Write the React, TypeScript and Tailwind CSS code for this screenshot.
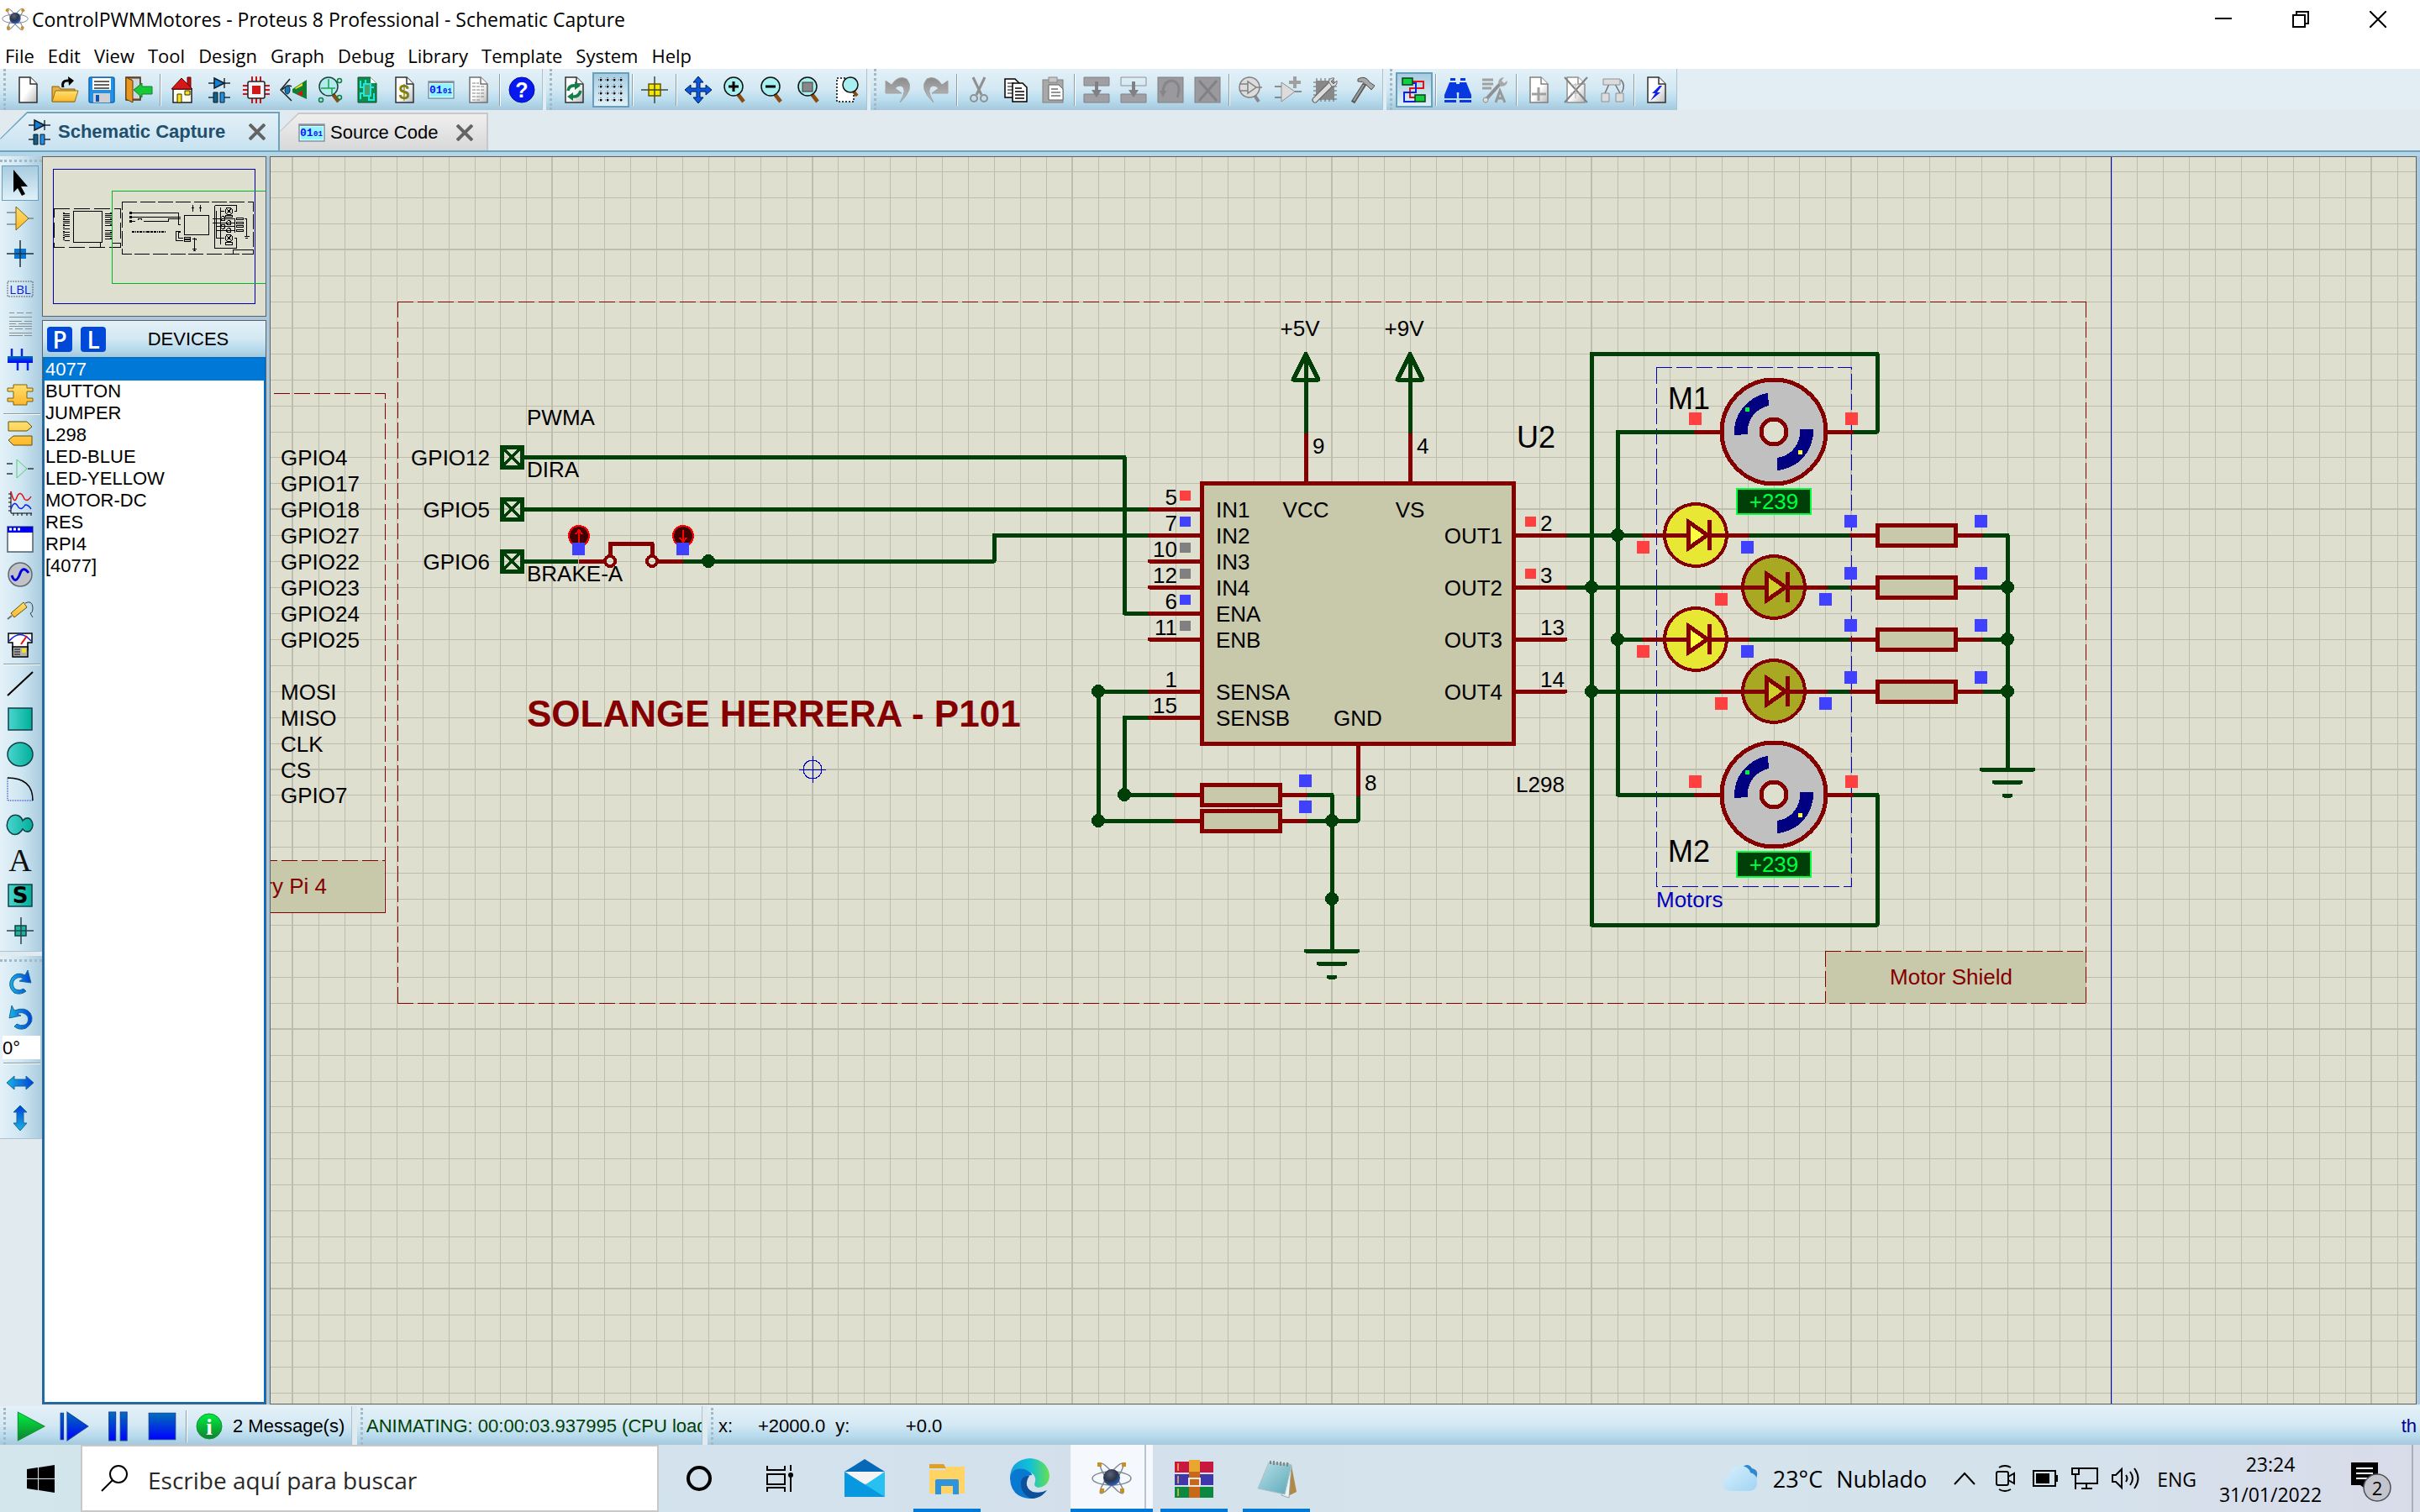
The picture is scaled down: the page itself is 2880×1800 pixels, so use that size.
import React from "react";

const ARIAL = "font-['Liberation_Sans',Arial,sans-serif]";

/* ------------------------------------------------------------------ */
/* Shared gradients                                                    */
/* ------------------------------------------------------------------ */

function Gradients() {
  return (
    <svg className="absolute h-0 w-0" aria-hidden="true">
      <defs>
        <linearGradient id="blueV" x1="0" y1="0" x2="0" y2="1">
          <stop offset="0" stopColor="#0070b8" />
          <stop offset="1" stopColor="#0000ff" />
        </linearGradient>
        <linearGradient id="blueH" x1="0" y1="0" x2="1" y2="0">
          <stop offset="0" stopColor="#18b4e4" />
          <stop offset="1" stopColor="#0040d8" />
        </linearGradient>
        <linearGradient id="blueUp" x1="0" y1="1" x2="0" y2="0">
          <stop offset="0" stopColor="#18b4e4" />
          <stop offset="1" stopColor="#0040d8" />
        </linearGradient>
        <linearGradient id="greenV" x1="0" y1="0" x2="0" y2="1">
          <stop offset="0" stopColor="#00f040" />
          <stop offset="1" stopColor="#108030" />
        </linearGradient>
        <linearGradient id="tealH" x1="0" y1="0" x2="1" y2="0">
          <stop offset="0" stopColor="#4cd4d0" />
          <stop offset="1" stopColor="#00b098" />
        </linearGradient>
        <linearGradient id="goldV" x1="0" y1="0" x2="0" y2="1">
          <stop offset="0" stopColor="#ffe070" />
          <stop offset="1" stopColor="#fcb828" />
        </linearGradient>
        <linearGradient id="grayV" x1="0" y1="0" x2="0" y2="1">
          <stop offset="0" stopColor="#8c8c8c" />
          <stop offset="1" stopColor="#c0c0c0" />
        </linearGradient>
        <linearGradient id="paper" x1="0" y1="0" x2="1" y2="1">
          <stop offset="0.5" stopColor="#ffffff" />
          <stop offset="1" stopColor="#b8b8b8" />
        </linearGradient>
        <linearGradient id="edgeTop" x1="0" y1="0" x2="1" y2="0">
          <stop offset="0" stopColor="#1a9cdc" />
          <stop offset="0.5" stopColor="#10c0d8" />
          <stop offset="1" stopColor="#68e050" />
        </linearGradient>
        <linearGradient id="cloud" x1="0" y1="0" x2="1" y2="1">
          <stop offset="0" stopColor="#d8f0fc" />
          <stop offset="1" stopColor="#a0d4f4" />
        </linearGradient>
        <linearGradient id="note" x1="0" y1="0" x2="1" y2="1">
          <stop offset="0" stopColor="#b8e0e8" />
          <stop offset="1" stopColor="#5ca8b8" />
        </linearGradient>
        <radialGradient id="atom" cx="0.4" cy="0.3" r="0.8">
          <stop offset="0" stopColor="#586478" />
          <stop offset="0.5" stopColor="#2c3448" />
          <stop offset="1" stopColor="#3070e0" />
        </radialGradient>
      </defs>
    </svg>
  );
}

function Icon({ children, className = "h-8 w-8" }: { children: React.ReactNode; className?: string }) {
  return (
    <svg viewBox="0 0 32 32" className={`${className} shrink-0 overflow-visible`} fill="none" aria-hidden="true">
      {children}
    </svg>
  );
}

/* ------------------------------------------------------------------ */
/* Toolbar icons                                                       */
/* ------------------------------------------------------------------ */

const page = (stroke = "#303030") => (
  <>
    <path d="M6 1H19L27 9V31H6Z" fill="url(#paper)" stroke={stroke} strokeWidth="1.5" />
    <path d="M19 1V9H27" fill="#fff" stroke={stroke} strokeWidth="1.5" />
  </>
);

const lens = (fill = "#a8f0f0", stroke = "#101010", handle = "#8a4a10") => (
  <>
    <path d="M19 21L26 30" stroke={handle} strokeWidth="4.5" />
    <circle cx="14" cy="12" r="11" fill={fill} stroke={stroke} strokeWidth="1.5" />
  </>
);

const schematicIcon = (
  <>
    <path d="M3 8H29M3 25H10M22 25H29M22 2V14" stroke="#203040" strokeWidth="1.5" />
    <path d="M10 2L22 8L10 14Z" fill="#1080d8" stroke="#101820" strokeWidth="1.5" />
    <path d="M9 19H14V31H9Z" fill="#10608c" stroke="#101820" />
    <path d="M17 19H22V31H17Z" fill="#2090e8" stroke="#101820" />
  </>
);

const sourceIcon = (
  <>
    <rect x="1" y="6" width="30" height="20" fill="#d8ffff" stroke="#7c98a8" strokeWidth="1.5" />
    <path d="M1 7H31" stroke="#8c8c98" strokeWidth="2" />
    <rect x="3" y="9" width="26" height="15" fill="#90f4fc" />
    <text x="2" y="20" fontSize="13" fontWeight="bold" fill="#1010f0" fontFamily="Liberation Mono, monospace">
      01
    </text>
    <text x="18" y="20" fontSize="9" fontWeight="bold" fill="#1010f0" fontFamily="Liberation Mono, monospace">
      01
    </text>
  </>
);

const I: Record<string, React.ReactNode> = {
  new: page(),
  open: (
    <>
      <path d="M1 30V12H9L11 15H28V30Z" fill="#e8b040" stroke="#806010" />
      <path d="M1 30L5 17H32L28 30Z" fill="url(#goldV)" stroke="#907020" />
      <path d="M14 13Q12 4 21 5" stroke="#000" strokeWidth="3" />
      <path d="M20 0L27 5L21 11Z" fill="#000" />
    </>
  ),
  save: (
    <>
      <rect x="1" y="1" width="30" height="30" rx="2" fill="#2090e8" stroke="#1068b0" strokeWidth="1.5" />
      <rect x="5" y="2" width="22" height="14" fill="#fff" />
      <path d="M7 6H25M7 10H25M7 14H25" stroke="#303030" strokeWidth="1.5" />
      <rect x="6" y="20" width="20" height="11" fill="#d0d0d0" />
      <rect x="9" y="22" width="4" height="8" fill="#1050b0" />
    </>
  ),
  exit: (
    <>
      <path d="M1 1H18V28H1Z" fill="#a08060" stroke="#503010" strokeWidth="1.5" />
      <path d="M8 3H17V26H8Z" fill="#c8d8e0" />
      <path d="M1 1L9 5V31L1 27Z" fill="#e89820" stroke="#603808" />
      <path d="M10 16L20 8V12H32V21H20V25Z" fill="#18c838" stroke="#108028" />
    </>
  ),
  home: (
    <>
      <path d="M22 1H26V15H22Z" fill="#c01010" stroke="#600" />
      <path d="M5 15H27V31H5Z" fill="#fffff0" stroke="#202020" strokeWidth="1.5" />
      <path d="M3 15L15 2L28 15Z" fill="#d81818" stroke="#500" />
      <path d="M10 21H15V31H10ZM19 17H25V22H19Z" fill="#f8e020" stroke="#303000" />
    </>
  ),
  sch: schematicIcon,
  chip: (
    <>
      <path d="M11 0V32M16 0V32M21 0V32M0 11H32M0 16H32M0 21H32" stroke="#d81010" strokeWidth="2" />
      <rect x="6" y="6" width="20" height="20" rx="2" fill="#f0f4f8" stroke="#202020" strokeWidth="1.5" />
      <rect x="11" y="11" width="10" height="10" fill="#d01818" />
    </>
  ),
  eye: (
    <>
      <path d="M12 3L1 16L14 29M3 16Q9 9 14 12" stroke="#202020" strokeWidth="1.5" />
      <ellipse cx="9" cy="16" rx="3" ry="5" fill="#1878b8" stroke="#082840" />
      <path d="M15 15L32 4V27L15 19Z" fill="#108030" />
      <path d="M18 14L27 8V11L19 15Z" fill="#f8e020" />
      <path d="M20 21L27 17V23Z" fill="#e01010" />
    </>
  ),
  inspect: (
    <>
      {lens("#b0ecec", "#204040")}
      <path d="M5 14H22M14 3V14M18 14V21" stroke="#20a050" strokeWidth="1.5" />
      <circle cx="27" cy="5" r="2.5" stroke="#108040" strokeWidth="1.5" />
      <circle cx="5" cy="28" r="2.5" stroke="#108040" strokeWidth="1.5" />
      <circle cx="27" cy="25" r="2.5" stroke="#108040" strokeWidth="1.5" />
    </>
  ),
  pcb: (
    <>
      <path d="M5 1H20L27 8V31H5Z" fill="#108c50" stroke="#085028" />
      <path d="M20 1V8H27Z" fill="#fff" />
      <rect x="12" y="9" width="8" height="14" fill="#48a070" stroke="#20e8d8" strokeWidth="2" />
      <path d="M8 5V13H12M8 27V20H12M14 9V4M18 23V28H24V20M20 13H24" stroke="#20e8d8" strokeWidth="2" />
    </>
  ),
  bom: (
    <>
      {page()}
      <text x="16" y="27" textAnchor="middle" fontSize="23" fontWeight="bold" fill="#808010" fontFamily="Liberation Sans, sans-serif">
        $
      </text>
    </>
  ),
  code: sourceIcon,
  notes: (
    <>
      {page("#707070")}
      <path d="M9 8H17M9 12H24M9 16H24M9 20H24M9 24H24M9 28H18" stroke="#808080" strokeDasharray="4 1" />
    </>
  ),
  help: (
    <>
      <circle cx="16" cy="16" r="15" fill="#0818f0" stroke="#0008a0" />
      <text x="16" y="25" textAnchor="middle" fontSize="25" fontWeight="bold" fill="#fff" fontFamily="Liberation Sans, sans-serif">
        ?
      </text>
    </>
  ),
  refresh: (
    <>
      {page()}
      <path d="M9 17Q10 10 18 11M24 17Q22 25 14 24" stroke="#108048" strokeWidth="3.5" />
      <path d="M17 6L24 11L17 16ZM15 19L8 24L15 29Z" fill="#108048" />
    </>
  ),
  grid: (
    <>
      {[4, 12, 20, 28].map((y) => (
        <path key={y} d={`M1 ${y}H32`} stroke="#303840" strokeDasharray="1 3" />
      ))}
      {[4, 12, 20, 28].map((x) => (
        <path key={x} d={`M${x} 1V32`} stroke="#303840" strokeDasharray="1 3" />
      ))}
      {[4, 12, 20, 28].map((y) => (
        <path key={`c${y}`} d={`M3 ${y}H5M11 ${y}H13M19 ${y}H21M27 ${y}H29`} stroke="#000" strokeWidth="2" />
      ))}
    </>
  ),
  origin: (
    <>
      <rect x="9" y="9" width="14" height="14" fill="#f8e800" stroke="#605800" strokeWidth="1.5" />
      <path d="M16 0V32M0 16H32" stroke="#404838" strokeWidth="1.5" />
    </>
  ),
  pan: (
    <path
      d="M16 0L22 7H18V14H25V10L32 16L25 22V18H18V25H22L16 32L10 25H14V18H7V22L0 16L7 10V14H14V7H10Z"
      fill="#0858e0"
      stroke="#001850"
    />
  ),
  zin: (
    <>
      {lens()}
      <path d="M8 12H20M14 6V18" stroke="#000" strokeWidth="3" />
    </>
  ),
  zout: (
    <>
      {lens()}
      <path d="M8 12H20" stroke="#000" strokeWidth="3" />
    </>
  ),
  zall: (
    <>
      {lens()}
      <rect x="8" y="7" width="12" height="11" fill="#888" stroke="#404040" />
    </>
  ),
  zarea: (
    <>
      <rect x="5" y="2" width="20" height="28" fill="#fff" stroke="#000" strokeWidth="1.5" strokeDasharray="2 2" />
      <path d="M24 17L29 23" stroke="#8a4a10" strokeWidth="4" />
      <circle cx="21" cy="10" r="9" fill="#a8f0f0" stroke="#101010" strokeWidth="1.5" />
    </>
  ),
  undo: (
    <path d="M1 5L8 10Q16 -2 26 3Q36 14 18 31Q28 14 19 11Q15 11 12 14L20 20H1Z" fill="url(#grayV)" stroke="#a0a0a0" />
  ),
  redo: (
    <path d="M31 5L24 10Q16 -2 6 3Q-4 14 14 31Q4 14 13 11Q17 11 20 14L12 20H31Z" fill="url(#grayV)" stroke="#a0a0a0" />
  ),
  cut: (
    <>
      <path d="M9 1L19 22M23 1L13 22" stroke="#909090" strokeWidth="3" />
      <circle cx="10" cy="26" r="4" stroke="#909090" strokeWidth="2" />
      <circle cx="22" cy="26" r="4" stroke="#909090" strokeWidth="2" />
    </>
  ),
  copy: (
    <>
      <path d="M3 3H15L20 8V25H3Z" fill="#fff" stroke="#000" strokeWidth="1.5" />
      <path d="M6 8H14M6 12H14M6 16H14M6 20H14" stroke="#000" />
      <path d="M12 8H24L29 13V30H12Z" fill="#fff" stroke="#000" strokeWidth="1.5" />
      <path d="M15 14H23M15 18H26M15 22H26M15 26H26" stroke="#000" strokeWidth="1.5" />
    </>
  ),
  paste: (
    <>
      <rect x="4" y="4" width="24" height="27" fill="#a8a8a8" stroke="#808080" />
      <rect x="11" y="1" width="10" height="6" fill="#c8c8c8" stroke="#888" />
      <path d="M11 10H23L28 15V28H11Z" fill="#fff" stroke="#606060" />
      <path d="M14 15H22M14 19H25M14 23H25" stroke="#707070" strokeWidth="1.5" />
    </>
  ),
  bcopy: (
    <>
      <path d="M1 1H31V11H1ZM1 21H31V31H1Z" fill="#a0a0a4" stroke="#808088" />
      <path d="M14 6H18V16H22L16 25L10 16H14Z" fill="#808084" />
    </>
  ),
  bmove: (
    <>
      <path d="M1 1H31V11H1Z" stroke="#909094" />
      <path d="M1 21H31V31H1Z" fill="#a0a0a4" stroke="#808088" />
      <path d="M14 6H18V16H22L16 25L10 16H14Z" fill="#808084" />
    </>
  ),
  brot: (
    <>
      <rect x="1" y="1" width="30" height="30" fill="#9a9a9e" stroke="#808084" />
      <path d="M24 25Q30 8 18 5Q8 5 7 18" stroke="#86868a" strokeWidth="3" />
      <path d="M3 17H11L7 25Z" fill="#86868a" />
    </>
  ),
  bdel: (
    <>
      <rect x="1" y="1" width="30" height="30" fill="#9a9a9e" stroke="#808084" />
      <path d="M6 5L27 29M27 5L6 29" stroke="#828286" strokeWidth="3" />
    </>
  ),
  pick: (
    <>
      <path d="M19 21L25 30" stroke="#888" strokeWidth="4" />
      <circle cx="14" cy="13" r="12" fill="#dcdcdc" stroke="#808080" strokeWidth="1.5" />
      <path d="M3 9H12M3 17H12M12 6V20L22 13ZM22 13H29" stroke="#808080" strokeWidth="1.5" />
    </>
  ),
  make: (
    <>
      <path d="M0 12H8M0 25H8M24 18H32" stroke="#707070" strokeWidth="1.5" />
      <path d="M8 7V30L24 18Z" fill="#dcdcdc" stroke="#909090" />
      <path d="M24 0V14M17 7H31" stroke="#a0a0a0" strokeWidth="4" />
    </>
  ),
  pack: (
    <>
      <path d="M6 2V30M11 2V30M16 2V30M21 2V30M26 2V30M2 7H30M2 12H30M2 17H30M2 22H30M2 27H30" stroke="#606060" />
      <rect x="5" y="5" width="22" height="22" fill="#888" />
      <path d="M4 28L22 10" stroke="#606060" strokeWidth="7" strokeLinecap="round" />
      <path d="M4 28L22 10" stroke="#dcdcdc" strokeWidth="5" strokeLinecap="round" />
      <path d="M20 6Q22 1 27 2L23 6L26 9L30 5Q31 12 24 12Z" fill="#dcdcdc" stroke="#707070" />
    </>
  ),
  hammer: (
    <>
      <path d="M5 31L19 9" stroke="#585858" strokeWidth="5" />
      <path d="M6 29L18 10" stroke="#a0a0a0" strokeWidth="2" />
      <path d="M11 3Q20 -2 25 7L31 11L27 16L21 10Q17 5 11 6Z" fill="#a8a8a8" stroke="#505050" />
    </>
  ),
  wire: (
    <>
      <path d="M13 6H27V14H11V25H19" stroke="#e81010" strokeWidth="2" />
      <path d="M10 8H18V14M18 13V19H4V30H18" stroke="#1020e0" strokeWidth="2" />
      <rect x="2" y="2" width="12" height="8" fill="#10d040" stroke="#084018" strokeWidth="1.5" />
      <rect x="17" y="22" width="12" height="8" fill="#10d040" stroke="#084018" strokeWidth="1.5" />
    </>
  ),
  find: (
    <path d="M7 2H13V5H7ZM19 2H25V5H19ZM6 7H14L15 26H0V22ZM18 7H26L32 22V26H17ZM13 9H19V19H13ZM0 28H14V31H0ZM18 28H32V31H18Z" fill="#0838e0" />
  ),
  prop: (
    <>
      <path d="M1 4H14M1 9H14M1 14H12" stroke="#a0a0a0" strokeWidth="3" />
      <path d="M4 29L22 9" stroke="#909090" strokeWidth="4" />
      <path d="M20 7Q21 1 27 1L24 5L27 8L31 5Q31 12 23 12Z" fill="#a8a8a8" />
      <circle cx="5" cy="28" r="3" fill="#dcdcdc" stroke="#909090" />
      <path d="M17 31L22 17L28 31M19 26H26" stroke="#989898" strokeWidth="3" />
    </>
  ),
  sheetAdd: (
    <>
      {page("#808080")}
      <path d="M16 13V29M8 21H25" stroke="#a0a0a0" strokeWidth="3" />
    </>
  ),
  sheetDel: (
    <>
      {page("#909090")}
      <path d="M3 1L30 31M30 1L3 31" stroke="#808080" strokeWidth="2" />
      <path d="M10 10H22M10 20H22M16 8V26" stroke="#b0b0b0" />
    </>
  ),
  parent: (
    <>
      <path d="M12 9L7 20M19 9L25 20M26 4Q32 10 27 19" stroke="#707070" strokeWidth="1.5" />
      <path d="M5 3H25V10H5ZM3 20H12V30H3ZM20 20H29V30H20Z" fill="#dcdcdc" stroke="#909090" />
    </>
  ),
  erc: (
    <>
      {page()}
      <path d="M20 11L11 20H15L9 29L21 19H17L23 11Z" fill="#1020e8" />
    </>
  ),
};

/* ------------------------------------------------------------------ */
/* Mode icons for the left tool column                                 */
/* ------------------------------------------------------------------ */

const M: Record<string, React.ReactNode> = {
  select: <path d="M8 0V27L13 22L18 31L22 29L17 20H25Z" fill="#000" />,
  component: (
    <>
      <path d="M0 9H11M0 23H11M25 16H32" stroke="#808890" strokeWidth="1.5" />
      <path d="M11 2L26 16L11 30Z" fill="url(#goldV)" stroke="#806010" />
    </>
  ),
  junction: (
    <>
      <rect x="9" y="10" width="14" height="12" fill="#0878d8" />
      <path d="M16 0V32M0 16H32" stroke="#203038" strokeWidth="1.5" />
    </>
  ),
  label: (
    <>
      <rect x="1" y="7" width="30" height="18" stroke="#606060" strokeDasharray="2 1" />
      <text x="16" y="22" textAnchor="middle" fontSize="15" fill="#1020c8" fontFamily="Open Sans, sans-serif">
        LBL
      </text>
    </>
  ),
  script: (
    <path
      d="M3 2H9M12 2H20M23 2H30M3 7H30M3 12H18M21 12H30M3 15H11M14 15H30M3 18H30M3 21H7M10 21H19M22 21H30M3 26H30M3 29H19M21 29H30"
      stroke="#88908f"
      shapeRendering="crispEdges"
    />
  ),
  bus: (
    <>
      <path d="M6 3V12M18 3V12M13 20V29M25 20V29" stroke="#0828e0" strokeWidth="2.5" />
      <rect x="1" y="12" width="30" height="8" fill="url(#blueV)" />
    </>
  ),
  subcircuit: (
    <path d="M8 4H24V8H31V12H24V20H31V24H24V28H8V24H1V20H8V12H1V8H8Z" fill="url(#goldV)" stroke="#806010" />
  ),
  terminal: (
    <path d="M2 2H24L30 8L24 13H2ZM30 19H8L2 24L8 30H30Z" fill="url(#goldV)" stroke="#605010" />
  ),
  pin: (
    <>
      <path d="M0 10H7M0 22H7M25 16H32" stroke="#303838" strokeWidth="1.5" />
      <path d="M12 5L24 16L12 27Z" stroke="#50d070" />
    </>
  ),
  graph: (
    <>
      <path d="M5 1V27H30M2 4H5M2 9H5M2 14H5M2 19H5M2 24H5M8 27V30M13 27V30M18 27V30M24 27V30M29 27V30" stroke="#000" />
      <path d="M5 1Q9 18 12 8Q16 -2 21 10Q25 14 29 7" stroke="#e81010" strokeWidth="1.5" />
      <path d="M5 22Q9 10 14 20Q18 24 22 17Q26 17 29 22" stroke="#1020e8" strokeWidth="1.5" />
    </>
  ),
  popup: (
    <>
      <rect x="1" y="1" width="30" height="30" fill="#fff" stroke="#506068" strokeWidth="1.5" />
      <rect x="1" y="1" width="30" height="7" fill="#0000f0" />
      <path d="M3 4H6M8 4H11M13 4H16" stroke="#fff" strokeWidth="3" />
    </>
  ),
  generator: (
    <>
      <circle cx="16" cy="16" r="14" fill="#c0c4c8" stroke="#606870" strokeWidth="1.5" />
      <path d="M6 17Q10 28 15 17Q19 4 26 14" stroke="#0000e8" strokeWidth="3" />
    </>
  ),
  probe: (
    <>
      <path d="M1 27L6 23" stroke="#707070" strokeWidth="2" />
      <path d="M5 20L20 7L24 13L9 25Z" fill="url(#goldV)" stroke="#605010" />
      <path d="M22 8Q30 4 31 13Q31 20 28 20L31 25" stroke="#304048" />
    </>
  ),
  meter: (
    <>
      <path d="M2 2H30V13H25V22H7V13H2Z" fill="#fff" stroke="#000" strokeWidth="1.5" />
      <path d="M3 11Q16 -4 29 11" stroke="#1020e8" strokeWidth="1.5" />
      <path d="M17 15L24 5" stroke="#e81010" strokeWidth="2" />
      <rect x="7" y="18" width="18" height="12" fill="#b0b0b0" stroke="#000" strokeWidth="1.5" />
      <path d="M9 21H16M9 24H16M9 27H16" stroke="#000" />
      <rect x="18" y="20" width="5" height="5" fill="#f8e020" />
    </>
  ),
  line: <path d="M1 30L31 2" stroke="#000" strokeWidth="2" />,
  box: <rect x="2" y="3" width="28" height="26" fill="url(#tealH)" stroke="#104048" strokeWidth="1.5" />,
  circle: <ellipse cx="16" cy="16" rx="15" ry="14" fill="url(#tealH)" stroke="#104048" strokeWidth="1.5" />,
  arc: (
    <>
      <path d="M1 2V29H31" stroke="#1020d0" strokeDasharray="1 1" />
      <path d="M1 2Q31 2 31 29" stroke="#000" strokeWidth="1.5" />
    </>
  ),
  shape: (
    <path d="M19 11Q23 6 28 9Q34 16 28 23Q23 26 19 21Q14 29 7 27Q-2 22 1 12Q5 2 14 5Q18 7 19 11Z" fill="url(#tealH)" stroke="#104048" strokeWidth="1.5" />
  ),
  text: (
    <text x="16" y="29" textAnchor="middle" fontSize="38" fill="#101010" fontFamily="Liberation Serif, serif">
      A
    </text>
  ),
  symbol: (
    <>
      <rect x="2" y="3" width="28" height="26" fill="url(#tealH)" stroke="#104048" strokeWidth="1.5" />
      <text x="16" y="25" textAnchor="middle" fontSize="26" fontWeight="bold" fill="#000" fontFamily="DejaVu Sans, sans-serif">
        S
      </text>
    </>
  ),
  marker: (
    <>
      <rect x="10" y="10" width="13" height="12" fill="#18b8a0" stroke="#104048" strokeWidth="1.5" />
      <path d="M17 0V32M0 16H32" stroke="#304048" strokeWidth="1.5" />
    </>
  ),
  cw: (
    <path d="M23 26Q17 31 9 28Q0 20 6 10Q12 2 22 7L25 1L29 16L15 14L20 11Q13 7 8 14Q6 21 11 24Q16 26 20 23Z" fill="url(#blueH)" stroke="#186898" />
  ),
  ccw: (
    <path d="M9 26Q15 31 23 28Q34 20 28 10Q22 2 9 7L6 1L3 16L17 13L12 11Q19 7 25 14Q27 21 22 24Q16 26 12 23Z" fill="url(#blueH)" stroke="#186898" />
  ),
  flipH: <path d="M0 16L9 8V12H23V8L32 16L23 24V20H9V24Z" fill="url(#blueH)" stroke="#186898" />,
  flipV: <path d="M16 1L24 9H20V22H24L16 31L8 22H12V9H8Z" fill="url(#blueUp)" stroke="#186898" />,
};

/* ------------------------------------------------------------------ */
/* Chrome                                                              */
/* ------------------------------------------------------------------ */

function Atom({ className }: { className: string }) {
  return (
    <svg viewBox="0 0 48 40" className={className} fill="none" aria-hidden="true">
      <ellipse cx="24" cy="19" rx="23" ry="8" stroke="#808898" strokeWidth="1.5" />
      <ellipse cx="24" cy="20" rx="23" ry="5" transform="rotate(55 24 20)" stroke="#808898" strokeWidth="1.5" />
      <ellipse cx="24" cy="20" rx="23" ry="5" transform="rotate(-55 24 20)" stroke="#808898" strokeWidth="1.5" />
      <circle cx="24" cy="18" r="10" fill="url(#atom)" />
      <circle cx="10" cy="4" r="3" fill="#c89020" />
      <circle cx="38" cy="4" r="3" fill="#c89020" />
      <circle cx="12" cy="35" r="3" fill="#c89020" />
      <circle cx="37" cy="35" r="3" fill="#c89020" />
    </svg>
  );
}

function TitleBar() {
  return (
    <header className="flex h-[46px] items-center bg-white pl-0.5 pr-1">
      <Atom className="h-7 w-8" />
      <h1 className="ml-1 text-[23px] leading-8 text-black">ControlPWMMotores - Proteus 8 Professional - Schematic Capture</h1>
      <div className="ml-auto flex h-full">
        <button aria-label="Minimize" className="flex w-[92px] items-center justify-center">
          <svg viewBox="0 0 20 20" className="h-5 w-5" aria-hidden="true">
            <path d="M0 9H20" stroke="#000" strokeWidth="2" />
          </svg>
        </button>
        <button aria-label="Restore" className="flex w-[92px] items-center justify-center">
          <svg viewBox="0 0 20 20" className="h-5 w-5" fill="none" aria-hidden="true">
            <path d="M1 5H15V19H1ZM5 5V1H19V15H15" stroke="#000" strokeWidth="2" />
          </svg>
        </button>
        <button aria-label="Close" className="flex w-[92px] items-center justify-center">
          <svg viewBox="0 0 20 20" className="h-5 w-5" aria-hidden="true">
            <path d="M0 0L20 20M20 0L0 20" stroke="#000" strokeWidth="2" />
          </svg>
        </button>
      </div>
    </header>
  );
}

const MENUS = ["File", "Edit", "View", "Tool", "Design", "Graph", "Debug", "Library", "Template", "System", "Help"];

function MenuBar() {
  return (
    <nav className="flex h-9 items-center gap-4 bg-white pl-1.5 pt-1 text-[22px] leading-8 text-black">
      {MENUS.map((m) => (
        <button key={m}>{m}</button>
      ))}
    </nav>
  );
}

const TOOLBARS: string[][] = [
  ["new", "open", "save", "exit", "|", "home", "sch", "chip", "eye", "inspect", "pcb", "bom", "code", "notes", "|", "help"],
  ["refresh", "grid", "|", "origin", "|", "pan", "zin", "zout", "zall", "zarea"],
  ["undo", "redo", "|", "cut", "copy", "paste", "|", "bcopy", "bmove", "brot", "bdel", "|", "pick", "make", "pack", "hammer"],
  ["wire", "|", "find", "prop", "|", "sheetAdd", "sheetDel", "parent", "|", "erc"],
];

const BAR = "bg-[linear-gradient(to_bottom,#e4f1f8,#d3e8f3_50%,#b9dcee_75%,#a6c8dc)]";

function Grip() {
  return <span className="mx-1 w-[3px] self-stretch border-l-[3px] border-dotted border-[#a4b8c4]" />;
}

function ToolBars() {
  return (
    <div className="flex h-[49px] gap-1 bg-[#e2eef4]">
      {TOOLBARS.map((bar, b) => (
        <div key={b} role="toolbar" className={`flex items-center border-r border-[#a8c4d4] pr-0.5 ${BAR}`}>
          <Grip />
          {bar.map((name, k) =>
            name === "|" ? (
              <span key={k} className="mx-[3px] h-[38px] w-0.5 border-l border-[#8c9ca8] bg-white" />
            ) : (
              <button
                key={k}
                aria-label={name}
                className={
                  name === "grid" || name === "wire"
                    ? "flex h-[42px] w-11 items-center justify-center border-2 border-[#68a0bc] bg-[linear-gradient(to_bottom,#a8cce0,#e0f0f8)]"
                    : "flex h-[42px] w-11 items-center justify-center"
                }
              >
                <Icon>{I[name]}</Icon>
              </button>
            ),
          )}
        </div>
      ))}
    </div>
  );
}

function CloseX() {
  return (
    <svg viewBox="0 0 20 20" className="h-5 w-5" aria-hidden="true">
      <path d="M1 1L19 19M19 1L1 19" stroke="#646464" strokeWidth="4" />
    </svg>
  );
}

function Tabs() {
  return (
    <div role="tablist" className={`flex h-[55px] flex-col bg-[#e0eaef] ${ARIAL}`}>
      <div className="flex h-[50px] items-end border-b-2 border-[#6ca3bd]">
        <div className="relative flex h-[46px] w-[333px] items-center bg-[linear-gradient(to_bottom,#e4f1f8,#c8e2f0)] pl-[31px] pt-0.5 [clip-path:polygon(0_32px,32px_0,100%_0,100%_100%,0_100%)]">
          <svg className="absolute inset-0 h-full w-full" fill="none" aria-hidden="true">
            <path d="M0 32L32 1H332V46" stroke="#6ca3bd" strokeWidth="2" />
          </svg>
          <button role="tab" aria-selected="true" className="relative flex items-center text-[22px] font-bold leading-8 text-[#20506e]">
            <Icon>{schematicIcon}</Icon>
            <span className="ml-1.5">Schematic Capture</span>
          </button>
          <button aria-label="Close Schematic Capture" className="relative ml-7">
            <CloseX />
          </button>
        </div>
        <div className="relative flex h-[45px] w-[248px] items-center bg-[linear-gradient(to_bottom,#f0f0f0,#d8d8d8)] pl-[22px] pt-0.5 [clip-path:polygon(0_22px,22px_0,100%_0,100%_100%,0_100%)]">
          <svg className="absolute inset-0 h-full w-full" fill="none" aria-hidden="true">
            <path d="M0 22L22 1H247V45" stroke="#c8c8c8" strokeWidth="2" />
          </svg>
          <button role="tab" aria-selected="false" className="relative flex items-center text-[22px] leading-8 text-black">
            <Icon>{sourceIcon}</Icon>
            <span className="ml-1.5">Source Code</span>
          </button>
          <button aria-label="Close Source Code" className="relative ml-[22px]">
            <CloseX />
          </button>
        </div>
      </div>
      <div className="h-[5px] bg-[#b4d5e6]" />
    </div>
  );
}

/* ------------------------------------------------------------------ */
/* Left column                                                         */
/* ------------------------------------------------------------------ */

const MODES = [
  "select", "component", "junction", "label", "script", "bus", "subcircuit", "|",
  "terminal", "pin", "graph", "popup", "generator", "probe", "meter", "|",
  "line", "box", "circle", "arc", "shape", "text", "symbol", "marker",
];

const SIDE = "bg-[linear-gradient(to_right,#e4f1f8,#cfe6f2_50%,#a9cbde)]";

function SideRule() {
  return <span className="my-px ml-1 mr-0.5 h-0.5 border-t border-[#8c9ca8] bg-white" />;
}

function ModeButton({ name }: { name: string }) {
  return (
    <button
      aria-label={name}
      className={
        name === "select"
          ? "ml-0.5 flex h-[42px] w-11 items-center justify-center border border-[#68a0bc] bg-[linear-gradient(to_bottom,#a8cce0,#e0f0f8)]"
          : "ml-0.5 flex h-[42px] w-11 items-center justify-center"
      }
    >
      <Icon>{M[name]}</Icon>
    </button>
  );
}

function ModeColumn() {
  return (
    <aside className="flex w-[50px] shrink-0 flex-col gap-[5px] bg-[#e0eaef]">
      <div className={`flex flex-col border-b border-[#a8c4d4] pb-[3px] ${SIDE}`}>
        <span className="my-1 border-t-[3px] border-dotted border-[#a4b8c4]" />
        {MODES.map((name, k) => (name === "|" ? <SideRule key={k} /> : <ModeButton key={k} name={name} />))}
      </div>
      <div className={`flex flex-col border-b border-[#a8c4d4] pb-[3px] ${SIDE}`}>
        <span className="my-1 border-t-[3px] border-dotted border-[#a4b8c4]" />
        <ModeButton name="cw" />
        <ModeButton name="ccw" />
        <input
          aria-label="Rotation angle"
          defaultValue="0°"
          className={`mb-[3px] ml-[3px] h-7 w-[45px] bg-white text-[22px] text-black ${ARIAL}`}
        />
        <SideRule />
        <ModeButton name="flipH" />
        <ModeButton name="flipV" />
      </div>
    </aside>
  );
}

function Overview() {
  return (
    <div className="border border-[#606060] bg-[#dfdfd0]">
      <svg viewBox="153 21 795 567" className="block w-full" fill="none" stroke="#000" strokeWidth="3" shapeRendering="crispEdges" aria-label="Sheet overview">
        <rect x="193" y="206" width="238" height="138" strokeDasharray="56 16" />
        <rect x="262" y="214" width="103" height="111" />
        <path d="M359 325V343M400 328H431V343" />
        <path d="M229 220V280M229 286V322" strokeWidth="6" strokeDasharray="4 3" />
        <path d="M230 222H248M230 229H248M230 236H248M230 243H248M230 250H248M230 257H248M230 264H248M230 276H248M230 290H248M230 297H248M230 304H248M230 318H248" />
        <path d="M375 222H397M375 229H397M375 236H397M375 243H397M375 250H397M375 257H397M375 264H397M375 284H397M375 291H397M375 298H397M375 305H397M375 312H397" />
        <path d="M397 220V270M397 282V318" strokeWidth="6" strokeDasharray="4 3" />
        <rect x="436" y="182" width="469" height="185" strokeDasharray="54 10" />
        <path d="M462 220H638V263H645M462 235H645M462 250H483M514 250H602V241H645M493 246V242H506V246" />
        <path d="M466 216V254" strokeWidth="8" strokeDasharray="9 6" />
        <path d="M471 288H594" strokeWidth="6" strokeDasharray="10 3 3 2 5 3" />
        <rect x="658" y="230" width="88" height="68" />
        <path d="M688 193V215M715 193V215M683 201H693M710 201H720M645 285H629V319H655M645 290H638V310H655M687 312H701V319M694 310V356M686 350H702M690 355H698" />
        <path d="M658 308H679V314H658ZM658 317H679V323H658Z" />
        <path d="M767 194H845V214H838M767 194V346H845V311H838M786 214H800M773 214V310H800M786 200V334M759 241H770M759 256H770M770 241H838M770 256H838M770 269H838M770 283H838M838 241V290" />
        <circle cx="817" cy="214" r="13" />
        <circle cx="817" cy="214" r="4" />
        <circle cx="817" cy="310" r="13" />
        <circle cx="817" cy="310" r="4" />
        <circle cx="796" cy="241" r="8" />
        <circle cx="796" cy="269" r="8" />
        <circle cx="817" cy="256" r="8" />
        <circle cx="817" cy="283" r="8" />
        <path d="M806 228H828V234H806ZM806 324H828V333H806ZM807 203L827 225M827 203L807 225M807 299L827 321M827 299L807 321" />
        <path d="M844 238H868V244H844ZM844 252H868V258H844ZM844 266H868V272H844ZM844 280H868V286H844ZM873 241H881V305M873 305H890M877 309H886" />
        <path d="M832 366V352H905" />
        <rect x="190" y="64" width="721" height="480" stroke="#0000b0" />
        <path d="M948 142H400V472H948" stroke="#00b828" />
      </svg>
    </div>
  );
}

const DEVICES = ["4077", "BUTTON", "JUMPER", "L298", "LED-BLUE", "LED-YELLOW", "MOTOR-DC", "RES", "RPI4", "[4077]"];

function DevicePanel() {
  return (
    <div className={`flex min-h-0 flex-1 flex-col border border-[#606060] ${ARIAL}`}>
      <div className={`flex h-[43px] items-center pl-[5px] text-[22px] ${BAR}`}>
        <button aria-label="Pick devices" className="flex h-[30px] w-[30px] items-center justify-center rounded bg-[#0048d8] font-['Open_Sans',sans-serif] text-[28px] font-semibold leading-none text-white">
          P
        </button>
        <button aria-label="Library manager" className="ml-2.5 flex h-[30px] w-[30px] items-center justify-center rounded bg-[#0048d8] font-['Open_Sans',sans-serif] text-[28px] font-semibold leading-none text-white">
          L
        </button>
        <h2 className="flex-1 pl-1.5 text-center text-black">DEVICES</h2>
      </div>
      <ul className="min-h-0 flex-1 border-2 border-[#0070c8] bg-white text-[22px] leading-[26px] text-black">
        {DEVICES.map((d, k) => (
          <li key={d}>
            <button className={k === 0 ? "block w-full bg-[#0078d7] pl-px text-left text-white" : "block w-full pl-px text-left"}>{d}</button>
          </li>
        ))}
      </ul>
    </div>
  );
}

/* ------------------------------------------------------------------ */
/* Schematic sheet                                                     */
/* ------------------------------------------------------------------ */

const PITCH = 30.92;
const X = (i: number) => Math.floor(967 + i * PITCH);
const Y = (j: number) => Math.floor(916 + j * PITCH);

const WIRE = "#004008";
const PIN = "#840000";
const RED = "#ff4040";
const BLUE = "#4040ff";
const GRAY = "#808080";
const BODY = "#c8c8aa";

function span(from: number, to: number) {
  return Array.from({ length: to - from + 1 }, (_, k) => from + k);
}

function Grid() {
  return (
    <g stroke="#bdbdae">
      {span(-20, 61).map((i) => (
        <path key={`v${i}`} d={`M${X(i)} 186V1675`} strokeWidth={i % 10 === 0 ? 2 : 1} />
      ))}
      {span(-23, 24).map((j) => (
        <path key={`h${j}`} d={`M320 ${Y(j)}H2880`} strokeWidth={j % 10 === 0 ? 2 : 1} />
      ))}
    </g>
  );
}

function T({ x, y, children, size = 26, fill = "#000", anchor = "start" }: { x: number; y: number; children: React.ReactNode; size?: number; fill?: string; anchor?: "start" | "middle" | "end" }) {
  return (
    <text x={x} y={y} fontSize={size} fill={fill} stroke="none" textAnchor={anchor}>
      {children}
    </text>
  );
}

function Level({ x, y, fill }: { x: number; y: number; fill: string }) {
  return <rect x={x} y={y} width="15" height="15" fill={fill} stroke="none" />;
}

function PinLevel({ x, y, fill }: { x: number; y: number; fill: string }) {
  return <rect x={x} y={y} width="13" height="12" fill={fill} />;
}

function Dot({ i, j }: { i: number; j: number }) {
  return <circle cx={X(i)} cy={Y(j)} r="8" fill={WIRE} />;
}

function Resistor({ i, j }: { i: number; j: number }) {
  const x = X(i);
  const y = Y(j);
  return (
    <g stroke={PIN} strokeWidth="5">
      <path d={`M${x - 31} ${y}H${x}M${x + 93} ${y}H${x + 124}`} strokeLinecap="round" />
      <rect x={x} y={y - 12} width="93" height="24" fill={BODY} />
      <Level x={x + 116} y={y - 24} fill={BLUE} />
    </g>
  );
}

function Ground({ i, j }: { i: number; j: number }) {
  const x = X(i);
  const y = Y(j);
  return (
    <path
      d={`M${x - 31} ${y}H${x + 31}M${x - 16} ${y + 15}H${x + 16}M${x - 4} ${y + 31}H${x + 4}`}
      stroke={WIRE}
      strokeWidth="5"
      strokeLinecap="round"
    />
  );
}

function Power({ i, label, pin }: { i: number; label: string; pin: string }) {
  const x = X(i);
  return (
    <g strokeWidth="5" strokeLinejoin="round" strokeLinecap="round">
      <path d={`M${x} 514V576`} stroke={PIN} />
      <path d={`M${x} 421V514M${x} 422L${x - 15} 452H${x + 15}Z`} stroke={WIRE} />
      <T x={x - 7} y={400} anchor="middle">
        {label}
      </T>
      <T x={x + 8} y={540}>
        {pin}
      </T>
    </g>
  );
}

function Led({ i, j, lit }: { i: number; j: number; lit: boolean }) {
  const x = X(i);
  const y = Y(j);
  return (
    <g stroke={PIN} strokeWidth="5">
      <path d={`M${x - 62} ${y}H${x - 38}M${x + 38} ${y}H${x + 62}`} strokeLinecap="round" />
      <circle cx={x} cy={y} r="37" strokeWidth="4" fill={lit ? "#e8e834" : "#a8a822"} />
      <path d={`M${x - 37} ${y}H${x - 9}M${x + 15} ${y}H${x + 37}`} strokeWidth="5" />
      <path d={`M${x - 9} ${y - 16}V${y + 16}L${x + 14} ${y}Z`} fill={lit ? "#ffff40" : "#d0d02a"} />
      <path d={`M${x + 16} ${y - 18}V${y + 18}`} />
      <Level x={x - 70} y={y + 7} fill={RED} />
      <Level x={x + 54} y={y + 7} fill={BLUE} />
    </g>
  );
}

function Motor({ j, speed }: { j: number; speed: string }) {
  const x = X(37);
  const y = Y(j);
  return (
    <g>
      <path d={`M${x - 93} ${y}H${x - 62}M${x + 62} ${y}H${x + 93}`} stroke={PIN} strokeWidth="5" strokeLinecap="round" />
      <circle cx={x} cy={y} r="62" fill="#c0c0c0" stroke={PIN} strokeWidth="5" />
      <circle cx={x} cy={y} r="15" fill="#dfdfd0" stroke={PIN} strokeWidth="5" />
      <g transform={`translate(${x} ${y})`}>
        <path d="M-47 4A47 47 0 0 1 -7 -46L-6 -31A31 31 0 0 0 -31 3Z" fill="#000080" />
        <path d="M47 -3A47 47 0 0 1 4 46V31A31 31 0 0 0 31 -3Z" fill="#000080" />
        <rect x="-34" y="-29" width="5" height="5" fill="#00f040" />
        <rect x="29" y="22" width="5" height="5" fill="#ffff40" />
        <rect x="-44" y="68" width="88" height="30" fill="#004008" stroke="#00ff40" strokeWidth="2" />
        <T x={0} y={92} fill="#00ff40" anchor="middle">
          {speed}
        </T>
      </g>
      <Level x={x - 101} y={y - 23} fill={RED} />
      <Level x={x + 85} y={y - 23} fill={RED} />
    </g>
  );
}

function Terminal({ j, label }: { j: number; label: string }) {
  const y = Y(j);
  return (
    <g stroke={WIRE} strokeWidth="5">
      <rect x="597" y={y - 12} width="24" height="24" />
      <path d={`M599 ${y - 10}L619 ${y + 10}M619 ${y - 10}L599 ${y + 10}`} strokeWidth="4" />
      <T x={583} y={y + 10} anchor="end">
        {label}
      </T>
    </g>
  );
}

function Toggle({ x, arrow }: { x: number; arrow: string }) {
  return (
    <g>
      <circle cx={x} cy="638" r="12" fill="#400000" stroke="#ff0000" strokeWidth="2" />
      <path d={arrow} transform={`translate(${x} 638)`} stroke="#ff0000" strokeWidth="2" />
      <rect x={x - 8} y="646" width="15" height="15" fill={BLUE} />
    </g>
  );
}

const GPIO: [string, number][] = [
  ["GPIO4", -12], ["GPIO17", -11], ["GPIO18", -10], ["GPIO27", -9], ["GPIO22", -8], ["GPIO23", -7], ["GPIO24", -6],
  ["GPIO25", -5], ["MOSI", -3], ["MISO", -2], ["CLK", -1], ["CS", 0], ["GPIO7", 1],
];

const LEFT_PINS: [string, string, number, string | null][] = [
  ["IN1", "5", -10, RED], ["IN2", "7", -9, BLUE], ["IN3", "10", -8, GRAY], ["IN4", "12", -7, GRAY],
  ["ENA", "6", -6, BLUE], ["ENB", "11", -5, GRAY], ["SENSA", "1", -3, null], ["SENSB", "15", -2, null],
];

const RIGHT_PINS: [string, string, number, string | null][] = [
  ["OUT1", "2", -9, RED], ["OUT2", "3", -7, RED], ["OUT3", "13", -5, null], ["OUT4", "14", -3, null],
];

function Chip() {
  return (
    <g>
      <g stroke={PIN} strokeWidth="5" strokeLinecap="round">
        {LEFT_PINS.map(([n, , j]) => (
          <path key={n} d={`M${X(13)} ${Y(j)}H${X(15)}`} />
        ))}
        {RIGHT_PINS.map(([n, , j]) => (
          <path key={n} d={`M${X(27)} ${Y(j)}H${X(29)}`} />
        ))}
        <path d={`M${X(21)} ${Y(-1)}V${Y(1)}`} />
      </g>
      <rect x={X(15)} y={Y(-11)} width={X(27) - X(15)} height={Y(-1) - Y(-11)} fill={BODY} stroke={PIN} strokeWidth="5" />
      {LEFT_PINS.map(([n, num, j, level]) => (
        <g key={n}>
          <T x={1447} y={Y(j) + 10}>{n}</T>
          <T x={1401} y={Y(j) - 5} anchor="end">{num}</T>
          {level && <PinLevel x={1404} y={Y(j) - 22} fill={level} />}
        </g>
      ))}
      {RIGHT_PINS.map(([n, num, j, level]) => (
        <g key={n}>
          <T x={1788} y={Y(j) + 10} anchor="end">{n}</T>
          <T x={1833} y={Y(j) - 5}>{num}</T>
          {level && <PinLevel x={1815} y={Y(j) - 22} fill={level} />}
        </g>
      ))}
      <T x={X(19)} y={616} anchor="middle">VCC</T>
      <T x={X(23)} y={616} anchor="middle">VS</T>
      <T x={X(21)} y={864} anchor="middle">GND</T>
      <T x={1624} y={941}>8</T>
      <T x={1805} y={533} size={36}>U2</T>
      <T x={1804} y={943}>L298</T>
    </g>
  );
}

const WIRES = [
  `M623 ${Y(-12)}H${X(12)}V${Y(-6)}H${X(13)}`,
  `M623 ${Y(-10)}H${X(13)}`,
  `M623 ${Y(-8)}H${X(-9)}M${X(-5)} ${Y(-8)}H${X(7)}V${Y(-9)}H${X(13)}`,
  `M${X(13)} ${Y(-3)}H${X(11)}V${Y(2)}H${X(14)}`,
  `M${X(13)} ${Y(-2)}H${X(12)}V${Y(1)}H${X(14)}`,
  `M${X(19)} ${Y(1)}H${X(20)}V${Y(7)}M${X(19)} ${Y(2)}H${X(21)}V${Y(1)}`,
  `M${X(40)} ${Y(-13)}H${X(41)}V${Y(-16)}H${X(30)}V${Y(6)}H${X(41)}V${Y(1)}H${X(40)}`,
  `M${X(34)} ${Y(-13)}H${X(31)}V${Y(1)}H${X(34)}`,
  `M${X(29)} ${Y(-9)}H${X(32)}M${X(36)} ${Y(-9)}H${X(40)}`,
  `M${X(29)} ${Y(-7)}H${X(35)}M${X(39)} ${Y(-7)}H${X(40)}`,
  `M${X(31)} ${Y(-5)}H${X(32)}M${X(36)} ${Y(-5)}H${X(40)}`,
  `M${X(30)} ${Y(-3)}H${X(35)}M${X(39)} ${Y(-3)}H${X(40)}`,
  `M${X(45)} ${Y(-9)}H${X(46)}V${Y(0)}M${X(45)} ${Y(-7)}H${X(46)}M${X(45)} ${Y(-5)}H${X(46)}M${X(45)} ${Y(-3)}H${X(46)}`,
];

const DOTS: [number, number][] = [
  [-4, -8], [11, -3], [11, 2], [12, 1], [20, 2], [20, 5], [31, -9], [30, -7], [31, -5], [30, -3], [46, -7], [46, -5], [46, -3],
];

function Sheet() {
  return (
    <main className="min-w-0 flex-1 overflow-hidden border border-[#606060] bg-[#dfdfd0]">
      <svg className="block h-full w-full font-['Liberation_Sans',Arial,sans-serif]" fill="none" aria-label="Schematic sheet">
        <g transform="translate(-322 -187)" shapeRendering="crispEdges">
          <Grid />
          <path d="M2512 187V1680" stroke="#0000c0" strokeWidth="1" />

          <rect x="300" y="1024" width="157" height="62" fill={BODY} />
          <rect x={X(39)} y={Y(7)} width={X(49) - X(39)} height={Y(9) - Y(7)} fill={BODY} />
          <g stroke={PIN} strokeDasharray="19 5">
            <path d="M326 468H458V1024M311 1024H458" />
            <path d={`M473 ${Y(-18)}H${X(49)}M473 ${Y(-18)}V${Y(9)}M${X(49)} ${Y(-18)}V${Y(9)}M473 ${Y(9)}H${X(49)}`} />
            <path d={`M${X(39)} ${Y(7)}H${X(49)}M${X(39)} ${Y(7)}V${Y(9)}`} />
          </g>
          <path d="M458 1024V1086H300" stroke={PIN} />
          <rect x="1971" y="437" width="232" height="618" stroke="#0000c0" strokeDasharray="19 5" />

          {GPIO.map(([name, j]) => (
            <T key={name} x={334} y={Y(j) + 10}>
              {name}
            </T>
          ))}
          <T x={389} y={1064} fill={PIN} anchor="end">Raspberry Pi 4</T>
          <T x={2322} y={1172} fill={PIN} anchor="middle">Motor Shield</T>
          <T x={1971} y={1080} fill="#0000c0">Motors</T>

          <g stroke={WIRE} strokeWidth="5" strokeLinejoin="round">
            {WIRES.map((d) => (
              <path key={d} d={d} />
            ))}
          </g>
          {DOTS.map(([i, j]) => (
            <Dot key={`${i},${j}`} i={i} j={j} />
          ))}

          <Terminal j={-12} label="GPIO12" />
          <Terminal j={-10} label="GPIO5" />
          <Terminal j={-8} label="GPIO6" />
          <T x={627} y={506}>PWMA</T>
          <T x={627} y={568}>DIRA</T>
          <T x={627} y={692}>BRAKE-A</T>

          <g stroke={PIN} strokeWidth="5">
            <path d="M689 668H720M726 662V647H776V662M782 668H813" strokeLinejoin="round" />
            <circle cx="726" cy="668" r="6" strokeWidth="4" />
            <circle cx="776" cy="668" r="6" strokeWidth="4" />
          </g>
          <Toggle x={689} arrow="M0 8V-6M-4 -2L0 -7L4 -2" />
          <Toggle x={813} arrow="M0 -7V6M-4 2L0 7L4 2" />

          <text x="627" y="865" fontSize="44" fontWeight="bold" fill={PIN}>
            SOLANGE HERRERA - P101
          </text>
          <g stroke="#0000c0">
            <circle cx="967" cy="916" r="11" />
            <path d="M951 916H983M967 900V932" />
          </g>

          <Power i={19} label="+5V" pin="9" />
          <Power i={23} label="+9V" pin="4" />
          <Chip />
          <Resistor i={15} j={1} />
          <Resistor i={15} j={2} />
          <Ground i={20} j={7} />

          {[-9, -7, -5, -3].map((j) => (
            <g key={j}>
              <Resistor i={41} j={j} />
              <Level x={X(40) - 8} y={Y(j) - 24} fill={BLUE} />
            </g>
          ))}
          <Ground i={46} j={0} />
          <Led i={34} j={-9} lit />
          <Led i={37} j={-7} lit={false} />
          <Led i={34} j={-5} lit />
          <Led i={37} j={-3} lit={false} />
          <T x={1985} y={487} size={36}>M1</T>
          <T x={1985} y={1026} size={36}>M2</T>
          <Motor j={-13} speed="+239" />
          <Motor j={1} speed="+239" />
        </g>
      </svg>
    </main>
  );
}

/* ------------------------------------------------------------------ */
/* Status bar                                                          */
/* ------------------------------------------------------------------ */

function StatusBar() {
  return (
    <footer className={`flex h-12 gap-1.5 border-t-2 border-[#e0eaef] bg-[#e0eaef] text-[22px] leading-8 text-black ${ARIAL}`}>
      <div className={`flex w-[419px] items-center border-r border-[#a8c4d4] pt-0.5 ${BAR}`}>
        <Grip />
        <button aria-label="Play" className="ml-1.5">
          <Icon className="h-9 w-[38px]">
            <path d="M3 1L31 16L3 31Z" fill="url(#greenV)" stroke="#109030" />
          </Icon>
        </button>
        <button aria-label="Step" className="ml-4">
          <Icon className="h-9 w-9">
            <path d="M1 2H4V30H1ZM8 1L30 16L8 31Z" fill="url(#blueV)" stroke="#1040a0" />
          </Icon>
        </button>
        <button aria-label="Pause" className="ml-4">
          <Icon className="h-9 w-9">
            <path d="M6 1H13V31H6ZM18 1H25V31H18Z" fill="url(#blueV)" stroke="#1040a0" />
          </Icon>
        </button>
        <button aria-label="Stop" className="ml-4">
          <Icon className="h-9 w-9">
            <path d="M2 2H30V30H2Z" fill="url(#blueV)" stroke="#1040a0" />
          </Icon>
        </button>
        <span className="ml-2.5 h-[38px] w-0.5 border-l border-[#8c9ca8] bg-white" />
        <button className="ml-2.5 flex items-center">
          <Icon>
            <circle cx="16" cy="16" r="15" fill="url(#greenV)" stroke="#109030" />
            <text x="16" y="26" textAnchor="middle" fontSize="27" fontWeight="bold" fill="#fff" fontFamily="Liberation Serif, serif">
              i
            </text>
          </Icon>
          <span className="ml-3">2 Message(s)</span>
        </button>
      </div>
      <div className={`flex w-[411px] items-center overflow-hidden border-r border-[#a8c4d4] pt-0.5 ${BAR}`}>
        <Grip />
        <p className="min-w-0 flex-1 overflow-hidden whitespace-nowrap text-[#004008]">ANIMATING: 00:00:03.937995 (CPU load</p>
      </div>
      <div className={`flex flex-1 items-center pr-1 pt-0.5 ${BAR}`}>
        <Grip />
        <p className="ml-0.5">x:</p>
        <p className="w-[110px] text-right">+2000.0</p>
        <p className="ml-3">y:</p>
        <p className="w-[110px] text-right">+0.0</p>
        <p className="ml-auto text-[#000090]">th</p>
      </div>
    </footer>
  );
}

/* ------------------------------------------------------------------ */
/* Taskbar                                                             */
/* ------------------------------------------------------------------ */

function AppSlot({ label, running = false, active = false, children }: { label: string; running?: boolean; active?: boolean; children: React.ReactNode }) {
  return (
    <button
      aria-label={label}
      className={
        active
          ? "relative flex w-[98px] items-center justify-center border-b-4 border-[#0078d7] bg-[#f5f8fc] pt-1"
          : "relative flex w-[98px] items-center justify-center border-b-4 border-transparent pt-1"
      }
    >
      {running && <span className="absolute inset-x-[9px] -bottom-1 h-1 bg-[#0078d7]" />}
      {active && <span className="absolute inset-y-0 right-2 w-0.5 bg-[#b8c4d0]" />}
      <svg viewBox="0 0 48 48" className="h-12 w-12" fill="none" aria-hidden="true">
        {children}
      </svg>
    </button>
  );
}

function Taskbar() {
  return (
    <footer className="flex h-20 bg-[linear-gradient(to_right,#d3e6ec,#d3e0ec_45%,#d5e4ec_60%,#d4e2ec_85%,#d9dbe9)] text-black">
      <button aria-label="Start" className="flex w-24 items-center justify-center">
        <svg viewBox="0 0 33 33" className="h-[33px] w-[33px]" aria-hidden="true">
          <path d="M0 5L13 3V16H0ZM14 3L33 0V16H14ZM0 17H13V30L0 28ZM14 17H33V33L14 30Z" />
        </svg>
      </button>
      <label className="flex w-[688px] items-center border-2 border-[#c8c8c8] bg-white pl-[22px]">
        <svg viewBox="0 0 32 32" className="h-8 w-8" fill="none" aria-hidden="true">
          <circle cx="21" cy="11" r="10" stroke="#000" strokeWidth="2" />
          <path d="M14 18L1 31" stroke="#000" strokeWidth="2" />
        </svg>
        <input
          aria-label="Buscar"
          placeholder="Escribe aquí para buscar"
          className="ml-6 min-w-0 flex-1 bg-transparent pt-1 text-[28px] outline-none placeholder:text-[#282828]"
        />
      </label>
      <button aria-label="Cortana" className="flex w-24 items-center justify-center">
        <svg viewBox="0 0 32 32" className="h-8 w-8" fill="none" aria-hidden="true">
          <circle cx="16" cy="16" r="13" stroke="#000" strokeWidth="4" />
        </svg>
      </button>
      <button aria-label="Task view" className="mr-1 flex w-24 items-center justify-center">
        <svg viewBox="0 0 32 32" className="h-8 w-8" fill="none" stroke="#000" strokeWidth="2" aria-hidden="true">
          <path d="M1 1V6H22V1M1 11H22V23H1ZM1 32V27H22V32M29 0V7M29 15V32" />
          <circle cx="29" cy="12" r="2" fill="#000" />
        </svg>
      </button>
      <AppSlot label="Mail">
        <path d="M0 16L24 1L48 16Z" fill="#0868b8" />
        <path d="M4 16H44V30H4Z" fill="#f4f4f4" />
        <path d="M0 16L24 32L48 16V46H0Z" fill="#28c0f0" />
        <path d="M0 16L48 46H0Z" fill="#0898e0" />
      </AppSlot>
      <AppSlot label="File Explorer" running>
        <path d="M3 7H20L23 12H3Z" fill="#e0a020" />
        <path d="M3 14H21L25 10H45V42H3Z" fill="#ffd464" />
        <path d="M10 43V27Q10 25 12 25H36Q38 25 38 27V43H31V33H17V43Z" fill="#3094dc" />
      </AppSlot>
      <AppSlot label="Edge">
        <path d="M1 24Q1 2 25 0Q46 2 48 21Q47 34 34 35Q28 33 31 28Q33 19 22 15Q6 13 1 24Z" fill="url(#edgeTop)" />
        <path d="M1 24Q3 10 18 13Q28 17 27 20Q20 20 20 29Q22 44 40 43Q33 48 24 48Q2 46 1 24Z" fill="#0878d0" />
        <path d="M14 28Q16 20 24 21Q16 34 28 40Q38 42 45 38Q38 48 26 48Q13 42 14 28Z" fill="#0c509c" />
      </AppSlot>
      <AppSlot label="Proteus" active>
        <ellipse cx="24" cy="24" rx="23" ry="8" stroke="#808898" strokeWidth="1.5" />
        <ellipse cx="24" cy="24" rx="22" ry="5" transform="rotate(53 24 24)" stroke="#808898" strokeWidth="1.5" />
        <ellipse cx="24" cy="24" rx="22" ry="5" transform="rotate(-53 24 24)" stroke="#808898" strokeWidth="1.5" />
        <circle cx="24" cy="23" r="10" fill="url(#atom)" />
        <path d="M7 5H12V10H7ZM36 5H41V10H36ZM10 36H15V41H10ZM34 36H39V41H34Z" fill="#c89020" />
      </AppSlot>
      <AppSlot label="WinRAR" running>
        <path d="M1 4H47V17H1Z" fill="#c81840" />
        <path d="M1 19H47V32H1Z" fill="#4038a8" />
        <path d="M1 34H47V47H1Z" fill="#0c8840" />
        <path d="M5 6V15M5 21V30M5 36V45" stroke="#f0c040" strokeWidth="1.5" />
        <path d="M18 2H31V47H18Z" fill="#c86818" />
        <path d="M18 2H31V16H18Z" fill="#e8a830" />
        <rect x="18" y="24" width="13" height="9" stroke="#e8e8e8" strokeWidth="2" />
      </AppSlot>
      <AppSlot label="Notepad" running>
        <path d="M42 9L48 40L36 46Z" fill="#b08848" />
        <path d="M38 6L42 9L39 47L30 44Z" fill="#f0f4f4" stroke="#90a8a8" />
        <path d="M15 5L42 8L34 43L2 36Z" fill="url(#note)" stroke="#a8c0c4" />
        <path d="M17 3V7M21 3V8M25 4V8M29 4V9M33 5V9M37 5V10" stroke="#808888" strokeWidth="2" />
      </AppSlot>

      <div className="ml-auto flex items-center pr-2">
        <button className="flex items-center text-[27px]">
          <svg viewBox="0 0 42 32" className="h-8 w-[42px]" aria-hidden="true">
            <path d="M22 4Q30 -4 35 4Q44 6 40 16L30 14Z" fill="#3088d0" />
            <path d="M9 31Q-1 30 1 20Q2 13 8 13Q9 1 20 1Q31 1 33 9Q41 11 41 20Q41 31 32 31Z" fill="url(#cloud)" />
          </svg>
          <span className="ml-[18px] pt-0.5">23°C</span>
          <span className="ml-4 pt-0.5">Nublado</span>
        </button>
        <button aria-label="Hidden icons" className="ml-8">
          <svg viewBox="0 0 26 16" className="h-4 w-[26px]" fill="none" aria-hidden="true">
            <path d="M1 15L13 2L25 15" stroke="#000" strokeWidth="2" />
          </svg>
        </button>
        <svg viewBox="0 0 24 32" className="ml-6 h-8 w-6" fill="none" stroke="#000" strokeWidth="2" aria-hidden="true">
          <rect x="1" y="8" width="14" height="16" rx="2" />
          <path d="M15 14L22 10V22L15 18M4 3Q11 -1 18 3M4 29Q11 33 18 29" />
        </svg>
        <svg viewBox="0 0 30 20" className="ml-5 h-5 w-[30px]" fill="none" stroke="#000" strokeWidth="2" aria-hidden="true">
          <rect x="1" y="1" width="26" height="18" />
          <rect x="5" y="5" width="14" height="10" fill="#000" />
          <path d="M29 6V14" />
        </svg>
        <svg viewBox="0 0 32 28" className="ml-4 h-7 w-8" fill="none" stroke="#000" strokeWidth="2" aria-hidden="true">
          <path d="M9 2H31V20H5M1 2H9V9H1ZM5 9V27M18 20V26M12 26H25" />
        </svg>
        <svg viewBox="0 0 34 28" className="ml-4 h-7 w-[34px]" fill="none" stroke="#000" strokeWidth="2" aria-hidden="true">
          <path d="M1 10H5L12 3V25L5 18H1ZM17 10Q20 14 17 18M22 6Q28 14 22 22M27 2Q36 14 27 26" />
        </svg>
        <span className="ml-5 pt-0.5 text-[23px]">ENG</span>
        <div className="ml-6 w-[128px] pt-0.5 text-center text-[23px] leading-9">
          <p>23:24</p>
          <p>31/01/2022</p>
        </div>
        <button aria-label="Notifications" className="relative ml-8 mt-2 h-12 w-12">
          <svg viewBox="0 0 48 48" className="h-12 w-12" fill="none" aria-hidden="true">
            <path d="M0 1H32V28H20V35L11 28H0Z" fill="#000" />
            <path d="M6 8H26M6 14H26M6 20H20" stroke="#fff" strokeWidth="2" />
            <circle cx="31" cy="31" r="16" fill="#c4c4cc" stroke="#505058" strokeWidth="1.5" />
          </svg>
          <span className="absolute bottom-0.5 left-[15px] w-8 text-center text-[22px] leading-[30px]">2</span>
        </button>
        <span className="ml-6 h-20 w-0.5 bg-[#a8b0c0]" />
      </div>
    </footer>
  );
}

export default function App() {
  return (
    <div className="flex h-screen flex-col overflow-hidden bg-[#e0eaef] font-['Open_Sans','Noto_Sans',sans-serif]">
      <Gradients />
      <TitleBar />
      <MenuBar />
      <ToolBars />
      <Tabs />
      <div className="flex min-h-0 flex-1 bg-[#a9c8dd] pr-1">
        <ModeColumn />
        <section className="mr-1 flex w-[267px] shrink-0 flex-col gap-1">
          <Overview />
          <DevicePanel />
        </section>
        <Sheet />
      </div>
      <StatusBar />
      <Taskbar />
    </div>
  );
}
